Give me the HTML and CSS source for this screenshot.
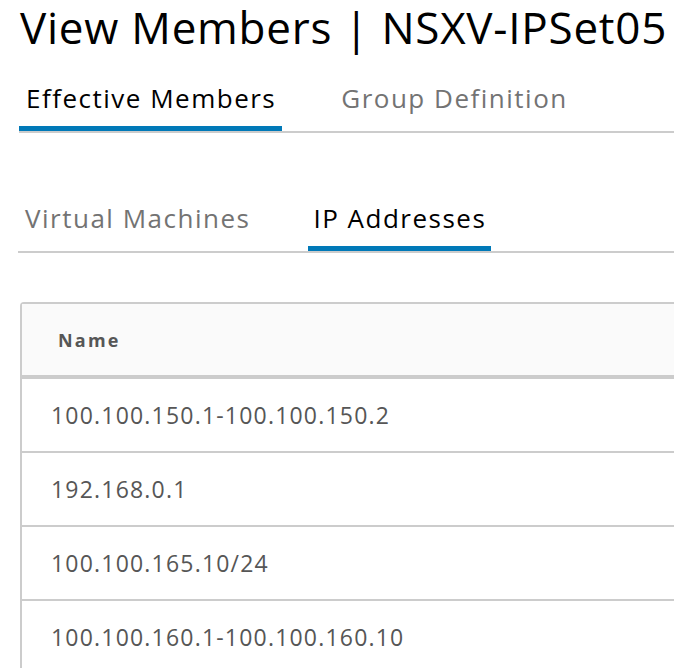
FILE: index.html
```html
<!DOCTYPE html>
<html>
<head>
<meta charset="utf-8">
<link rel="stylesheet" href="styles.css">
</head>
<body>
<div class="page">
  <h1 class="title">View Members | NSXV-IPSet05</h1>
  <div class="tabs tabs-main">
    <div class="tab active">Effective Members</div>
    <div class="tab">Group Definition</div>
  </div>
  <div class="tabs tabs-sub">
    <div class="tab">Virtual Machines</div>
    <div class="tab active">IP Addresses</div>
  </div>
  <div class="grid">
    <div class="grid-header"><div class="cell">Name</div></div>
    <div class="grid-row"><div class="cell">100.100.150.1-100.100.150.2</div></div>
    <div class="grid-row"><div class="cell">192.168.0.1</div></div>
    <div class="grid-row"><div class="cell">100.100.165.10/24</div></div>
    <div class="grid-row"><div class="cell">100.100.160.1-100.100.160.10</div></div>
  </div>
</div>
</body>
</html>
```
FILE: styles.css
```css
html, body {
  margin: 0;
  padding: 0;
  background: #fff;
  overflow: hidden;
}
body {
  font-family: "Open Sans", "Noto Sans", sans-serif;
  width: 674px;
  height: 668px;
}
.page {
  padding-left: 20px;
}
.title {
  margin: 0;
  font-weight: 400;
  font-size: 44px;
  line-height: 54px;
  letter-spacing: 0.75px;
  color: #000;
  white-space: nowrap;
}
.tabs {
  display: flex;
  gap: 52px;
  border-bottom: 2px solid #ccc;
  margin-left: -1px;
}
.tabs-main {
  margin-top: 28px;
}
.tabs-sub {
  margin-top: 69px;
  margin-left: -2px;
}
.tab {
  padding: 0 6px 12px 7px;
  font-size: 26px;
  line-height: 32px;
  letter-spacing: 1.5px;
  color: #737373;
  white-space: nowrap;
  border-bottom: 5px solid transparent;
}
.tab.active {
  color: #000;
  border-bottom-color: #0079b8;
}
.tabs-sub .tab.active {
  padding-left: 5px;
  padding-right: 5px;
}
.grid {
  margin-top: 49px;
  width: 700px;
  border: 2px solid #ccc;
  border-right: none;
  border-radius: 4px 0 0 0;
}
.grid-header {
  background: #fafafa;
  border-bottom: 4px solid #ccc;
  height: 71px;
  display: flex;
  align-items: center;
}
.grid-header .cell {
  font-weight: 700;
  font-size: 18px;
  letter-spacing: 2.2px;
  color: #565656;
  padding-left: 36px;
}
.grid-row {
  height: 72px;
  border-bottom: 2px solid #ccc;
  display: flex;
  align-items: center;
}
.grid-row .cell {
  font-size: 23px;
  letter-spacing: 1.2px;
  color: #565656;
  padding-left: 29px;
}
```
